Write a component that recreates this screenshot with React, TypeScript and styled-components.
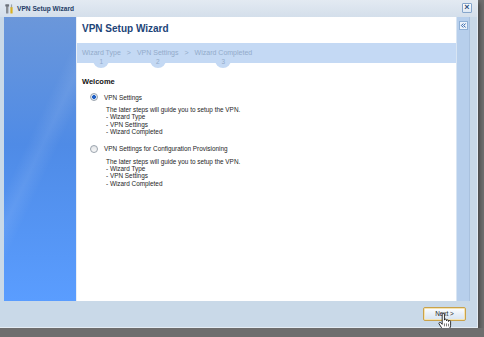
import React from 'react';
import styled, { createGlobalStyle } from 'styled-components';

const GlobalStyle = createGlobalStyle`
  html, body {
    margin: 0;
    padding: 0;
    background: #6e6e6e;
    font-family: "Liberation Sans", Arial, sans-serif;
  }
`;

const steps = [
  { label: 'Wizard Type', num: 1 },
  { label: 'VPN Settings', num: 2 },
  { label: 'Wizard Completed', num: 3 },
];

const options = [
  { id: 'vpn', label: 'VPN Settings', checked: true },
  { id: 'prov', label: 'VPN Settings for Configuration Provisioning', checked: false },
];

const details = ['- Wizard Type', '- VPN Settings', '- Wizard Completed'];

const ToolIcon = () => (
  <svg width="9" height="10" viewBox="0 0 9 10">
    <rect x="1" y="1" width="2.4" height="8.5" rx="0.6" fill="#8a8f96" />
    <rect x="0.3" y="0.3" width="3.8" height="2.2" rx="0.5" fill="#6d737b" />
    <rect x="5.4" y="3" width="2.2" height="6.5" rx="0.6" fill="#d9b020" />
    <rect x="5.9" y="0.4" width="1.2" height="3" fill="#9aa2ab" />
  </svg>
);

const CollapseIcon = () => (
  <svg width="7" height="7" viewBox="0 0 7 7">
    <path d="M3.3 1.5 1.4 3.5l1.9 2M5.6 1.5 3.7 3.5l1.9 2" fill="none" stroke="#2f62a8" strokeWidth="1" />
  </svg>
);

const HandCursor = () => (
  <svg width="14" height="18" viewBox="0 0 15 19">
    <path
      d="M4.5 1.6a1.2 1.2 0 0 1 2.4 0V7.5a1.1 1.1 0 0 1 2.2 0v.8a1.1 1.1 0 0 1 2.2 0v.7a1.1 1.1 0 0 1 2.2 0V13c0 2.6-1.5 4.6-4 4.6H7.1c-1.5 0-2.5-.8-3.3-2L1.2 11.6c-.5-.8 0-1.7.8-1.7.5 0 .9.3 1.2.7L4.5 12Z"
      fill="#fff"
      stroke="#111"
      strokeWidth="0.9"
      strokeLinejoin="round"
    />
    <path d="M6.9 11v3.2M9.1 11v3.2M11.3 11.3v2.9" stroke="#111" strokeWidth="0.6" />
  </svg>
);

const App = () => {
  return (
    <>
      <GlobalStyle />
      <Window>
        <TitleBar>
          <ToolIcon />
          <TitleText>VPN Setup Wizard</TitleText>
          <CloseBtn>×</CloseBtn>
        </TitleBar>

        <Body>
          <LeftPanel />
          <Main>
            <Heading>VPN Setup Wizard</Heading>
            <StepsBar>
              {steps.map((s, i) => (
                <React.Fragment key={s.num}>
                  {i > 0 && <Sep>&gt;</Sep>}
                  <Step>
                    <StepLabel>{s.label}</StepLabel>
                    <StepNum>{s.num}</StepNum>
                  </Step>
                </React.Fragment>
              ))}
            </StepsBar>

            <Section>
              <SectionTitle>Welcome</SectionTitle>
              {options.map((o) => (
                <Option key={o.id}>
                  <RadioRow>
                    <Radio $checked={o.checked} />
                    <span>{o.label}</span>
                  </RadioRow>
                  <Desc>
                    <p>The later steps will guide you to setup the VPN.</p>
                    {details.map((d) => (
                      <p key={d}>{d}</p>
                    ))}
                  </Desc>
                </Option>
              ))}
            </Section>
          </Main>
          <SideStrip>
            <CollapseBtn>
              <CollapseIcon />
            </CollapseBtn>
          </SideStrip>
        </Body>

        <Footer>
          <NextBtn>
            Next &gt;
            <Pointer>
              <HandCursor />
            </Pointer>
          </NextBtn>
        </Footer>
      </Window>
    </>
  );
};

const Window = styled.div`
  width: 478px;
  height: 328px;
  display: flex;
  flex-direction: column;
  background: #c9d9e8;
  border-right: 1px solid #e4ecf4;
  border-bottom: 1px solid #e4ecf4;
  box-sizing: border-box;
  box-shadow: 2px 3px 4px rgba(0, 0, 0, 0.35);
`;

const TitleBar = styled.div`
  height: 17px;
  display: flex;
  align-items: center;
  gap: 3px;
  padding: 0 5px 0 5px;
  background: linear-gradient(180deg, #e3eaf2 0%, #d4dfeb 100%);
`;

const TitleText = styled.span`
  flex: 1;
  font-size: 6.6px;
  font-weight: bold;
  color: #1f3d66;
`;

const CloseBtn = styled.div`
  width: 8px;
  height: 8px;
  margin-top: -2px;
  border: 1px solid #86a6cc;
  border-radius: 1px;
  background: linear-gradient(180deg, #ffffff, #dce7f3);
  color: #2d4f80;
  font-size: 9px;
  font-weight: bold;
  line-height: 7px;
  text-align: center;
`;

const Body = styled.div`
  flex: 1;
  display: flex;
  padding: 0 7px 0 4px;
`;

const LeftPanel = styled.div`
  width: 72px;
  border-right: 1px solid #e9eef5;
  background:
    linear-gradient(115deg, transparent 40%, rgba(255, 255, 255, 0.08) 48%, transparent 56%),
    linear-gradient(180deg, #6b97da 0%, #4f8be6 45%, #5a9dff 100%);
`;

const Main = styled.div`
  flex: 1;
  background: #ffffff;
  display: flex;
  flex-direction: column;
  padding-top: 5px;
`;

const Heading = styled.h1`
  margin: 0 0 0 5px;
  height: 21px;
  font-size: 10px;
  font-weight: bold;
  color: #1d4478;
  line-height: 13px;
`;

const StepsBar = styled.div`
  height: 20px;
  display: flex;
  align-items: flex-start;
  padding: 0 0 0 5px;
  background: #c4d9f4;
  color: #93abca;
  font-size: 7px;
`;

const Step = styled.div`
  display: flex;
  flex-direction: column;
  align-items: center;
`;

const StepLabel = styled.div`
  line-height: 10px;
  padding-top: 5px;
  white-space: nowrap;
`;

const StepNum = styled.div`
  width: 16px;
  height: 10px;
  line-height: 8px;
  text-align: center;
  font-size: 6.5px;
  border-radius: 0 0 8px 8px;
  background: #c4d9f4;
`;

const Sep = styled.div`
  line-height: 10px;
  padding-top: 5px;
  margin: 0 6px;
`;

const Section = styled.div`
  padding: 14px 0 0 5px;
  font-size: 6.4px;
  color: #1e1e1e;
`;

const SectionTitle = styled.div`
  font-size: 7.5px;
  font-weight: bold;
  line-height: 10px;
  color: #111;
  margin-bottom: 6px;
`;

const Option = styled.div`
  padding-left: 8px;
  margin-bottom: 9px;
`;

const RadioRow = styled.div`
  display: flex;
  align-items: center;
  gap: 6px;
  height: 8px;
`;

const Radio = styled.div<{ $checked: boolean }>`
  width: 6px;
  height: 6px;
  border-radius: 50%;
  border: 1px solid #9aa3ad;
  background: ${(p) =>
    p.$checked
      ? 'radial-gradient(circle, #1f5fc4 0 1.6px, #dfe8f3 2.2px)'
      : 'linear-gradient(180deg, #e2e4e7, #f8f8f8)'};
`;

const Desc = styled.div`
  padding: 5px 0 0 16px;

  p {
    margin: 0;
    line-height: 7.4px;
    white-space: nowrap;
  }
`;

const SideStrip = styled.div`
  width: 14px;
  background: #b7cfec;
  border-left: 1px solid #d8e5f3;
  border-right: 1px solid #a9c1de;
  box-sizing: border-box;
  display: flex;
  justify-content: center;
  padding-top: 4px;
`;

const CollapseBtn = styled.div`
  width: 7px;
  height: 7px;
  border: 1px solid #8fb0d6;
  background: #eef4fb;
  line-height: 0;
`;

const Footer = styled.div`
  height: 26px;
  display: flex;
  justify-content: flex-end;
  align-items: flex-start;
  padding: 6px 11px 0 0;
  box-sizing: border-box;
`;

const NextBtn = styled.div`
  position: relative;
  width: 41px;
  height: 12px;
  border: 1px solid #c9a24a;
  border-radius: 2px;
  box-shadow: inset 0 0 0 1px #f6e3b0;
  background: linear-gradient(180deg, #ffffff 0%, #e9f0f8 50%, #d8e4f1 100%);
  font-size: 6.4px;
  color: #222;
  text-align: center;
  line-height: 12px;
`;

const Pointer = styled.div`
  position: absolute;
  left: 14px;
  top: 5px;
  line-height: 0;
`;

export default App;
